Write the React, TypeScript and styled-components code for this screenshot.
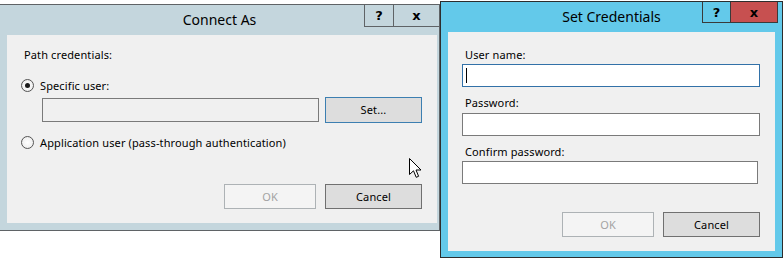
import React from 'react';
import styled, { createGlobalStyle } from 'styled-components';

const GlobalStyle = createGlobalStyle`
  html, body {
    margin: 0;
    padding: 0;
    background: #ffffff;
  }
  body {
    font-family: "Segoe UI", "Noto Sans", "Open Sans", sans-serif;
    font-size: 11px;
    letter-spacing: 0.12px;
    color: #000;
  }
  * {
    box-sizing: border-box;
  }
`;

const Desktop = styled.div`
  position: relative;
  width: 783px;
  height: 263px;
  overflow: hidden;
  display: flex;
  align-items: flex-start;
`;

interface WindowProps {
  $active?: boolean;
  $top: number;
  $width: number;
  $height: number;
}

const Window = styled.div<WindowProps>`
  margin-top: ${({ $top }) => $top}px;
  width: ${({ $width }) => $width}px;
  height: ${({ $height }) => $height}px;
  flex: none;
  display: flex;
  flex-direction: column;
  background: ${({ $active }) => ($active ? '#63c9ea' : '#c4d6dd')};
  border: 1px solid ${({ $active }) => ($active ? '#2d2d2d' : '#5f6366')};
  border-left-width: ${({ $active }) => ($active ? 1 : 0)}px;
`;

const TitleBar = styled.div`
  height: 30px;
  flex: none;
  display: grid;
  grid-template-columns: 1fr auto 1fr;
`;

const Title = styled.div`
  grid-column: 2;
  align-self: center;
  font-size: 14px;
  letter-spacing: 0;
  color: #000;
  white-space: nowrap;
  padding-bottom: 1px;
`;

const Captions = styled.div<{ $gap: number }>`
  grid-column: 3;
  justify-self: end;
  align-self: start;
  display: flex;
  margin-right: ${({ $gap }) => $gap}px;
`;

const CaptionButton = styled.div<{ $kind: 'help' | 'close'; $active?: boolean; $w: number; $h: number }>`
  width: ${({ $w }) => $w}px;
  height: ${({ $h }) => $h}px;
  display: flex;
  align-items: center;
  justify-content: center;
  font-family: "DejaVu Sans", "Liberation Sans", sans-serif;
  font-weight: bold;
  font-size: 13px;
  letter-spacing: 0;
  color: #000;
  border-left: 1px solid ${({ $active }) => ($active ? '#3a3a3a' : '#5f6366')};
  border-bottom: 1px solid ${({ $active }) => ($active ? '#3a3a3a' : '#5f6366')};
  border-right: ${({ $kind, $active }) => ($kind === 'close' && $active ? '1px solid #3a3a3a' : 'none')};
  background: ${({ $kind, $active }) =>
    $kind === 'close' && $active ? '#c75050' : 'transparent'};
`;

const Panel = styled.div<{ $left: number; $right: number; $bottom: number; $pt: number }>`
  flex: 1;
  margin: 0 ${({ $right }) => $right}px ${({ $bottom }) => $bottom}px ${({ $left }) => $left}px;
  background: #f0f0f0;
  padding: ${({ $pt }) => $pt}px 15px 14px 14px;
  display: flex;
  flex-direction: column;
`;

const Label = styled.div<{ $mt?: number }>`
  height: 16px;
  line-height: 16px;
  padding-left: 3px;
  margin-top: ${({ $mt }) => $mt ?? 0}px;
  white-space: nowrap;
`;

const RadioRow = styled.label<{ $mt: number }>`
  display: flex;
  align-items: center;
  gap: 6px;
  height: 16px;
  margin-top: ${({ $mt }) => $mt}px;
  white-space: nowrap;
`;

const RadioDot = styled.span<{ $checked?: boolean }>`
  width: 13px;
  height: 13px;
  border-radius: 50%;
  border: 1px solid #555;
  background: radial-gradient(circle, #ffffff 0%, #f2f2f2 60%, #dcdcdc 100%);
  display: flex;
  align-items: center;
  justify-content: center;
  flex: none;

  &::after {
    content: "";
    display: ${({ $checked }) => ($checked ? 'block' : 'none')};
    width: 5px;
    height: 5px;
    border-radius: 50%;
    background: #1a1a1a;
  }
`;

const FieldRow = styled.div`
  display: flex;
  align-items: center;
  gap: 6px;
  height: 26px;
  margin-top: 4px;
  margin-left: 21px;
`;

const TextBox = styled.div<{ $w: number; $h: number; $focus?: boolean; $bg?: string; $mt?: number }>`
  width: ${({ $w }) => $w}px;
  height: ${({ $h }) => $h}px;
  margin-top: ${({ $mt }) => $mt ?? 0}px;
  flex: none;
  background: ${({ $bg }) => $bg ?? '#ffffff'};
  border: 1px solid ${({ $focus }) => ($focus ? '#3271a8' : '#7a7a7a')};
  display: flex;
  align-items: center;
  padding-left: 3px;
`;

const Caret = styled.span`
  width: 1px;
  height: 15px;
  background: #000;
`;

const ButtonRow = styled.div<{ $mt: number }>`
  display: flex;
  justify-content: flex-end;
  gap: 9px;
  margin-top: ${({ $mt }) => $mt}px;
`;

const Button = styled.div<{ $w: number; $h?: number; $disabled?: boolean; $default?: boolean }>`
  width: ${({ $w }) => $w}px;
  height: ${({ $h }) => $h ?? 25}px;
  flex: none;
  display: flex;
  align-items: center;
  justify-content: center;
  background: ${({ $disabled }) => ($disabled ? '#f4f4f4' : '#dddddd')};
  color: ${({ $disabled }) => ($disabled ? '#a3a3a3' : '#000')};
  border: 1px solid
    ${({ $disabled, $default }) => ($disabled ? '#adb2b5' : $default ? '#3c7fb1' : '#707070')};
  padding-bottom: 1px;
`;

const Cursor = styled.svg`
  position: absolute;
  left: 409px;
  top: 158px;
`;

export default function App() {
  return (
    <>
      <GlobalStyle />
      <Desktop>
        <Window $top={4} $width={440} $height={227}>
          <TitleBar>
            <Title>Connect As</Title>
            <Captions $gap={0}>
              <CaptionButton $kind="help" $w={29} $h={22}>?</CaptionButton>
              <CaptionButton $kind="close" $w={46} $h={22}>x</CaptionButton>
            </Captions>
          </TitleBar>
          <Panel $left={7} $right={2} $bottom={7} $pt={12}>
            <Label>Path credentials:</Label>
            <RadioRow $mt={14}>
              <RadioDot $checked />
              Specific user:
            </RadioRow>
            <FieldRow>
              <TextBox $w={277} $h={24} $bg="#f0f0f0" />
              <Button $w={97} $h={26} $default>Set...</Button>
            </FieldRow>
            <RadioRow $mt={11}>
              <RadioDot />
              Application user (pass-through authentication)
            </RadioRow>
            <ButtonRow $mt={34}>
              <Button $w={92} $disabled>OK</Button>
              <Button $w={97}>Cancel</Button>
            </ButtonRow>
          </Panel>
        </Window>

        <Window $active $top={1} $width={343} $height={257}>
          <TitleBar>
            <Title>Set Credentials</Title>
            <Captions $gap={4}>
              <CaptionButton $kind="help" $active $w={28} $h={21}>?</CaptionButton>
              <CaptionButton $kind="close" $active $w={48} $h={21}>x</CaptionButton>
            </Captions>
          </TitleBar>
          <Panel $left={7} $right={7} $bottom={6} $pt={15}>
            <Label>User name:</Label>
            <TextBox $w={298} $h={23} $mt={1} $focus>
              <Caret />
            </TextBox>
            <Label $mt={8}>Password:</Label>
            <TextBox $w={298} $h={23} $mt={2} />
            <Label $mt={8}>Confirm password:</Label>
            <TextBox $w={296} $h={23} $mt={1} />
            <ButtonRow $mt={28}>
              <Button $w={92} $disabled>OK</Button>
              <Button $w={97}>Cancel</Button>
            </ButtonRow>
          </Panel>
        </Window>

        <Cursor width="14" height="21" viewBox="0 0 14 21">
          <path
            d="M0.5 0.5 L0.5 16.5 L4.5 12.8 L7.2 19.3 L9.6 18.3 L7 12 L12 12 Z"
            fill="#ffffff"
            stroke="#000000"
            strokeWidth="1"
            strokeLinejoin="miter"
          />
        </Cursor>
      </Desktop>
    </>
  );
}
